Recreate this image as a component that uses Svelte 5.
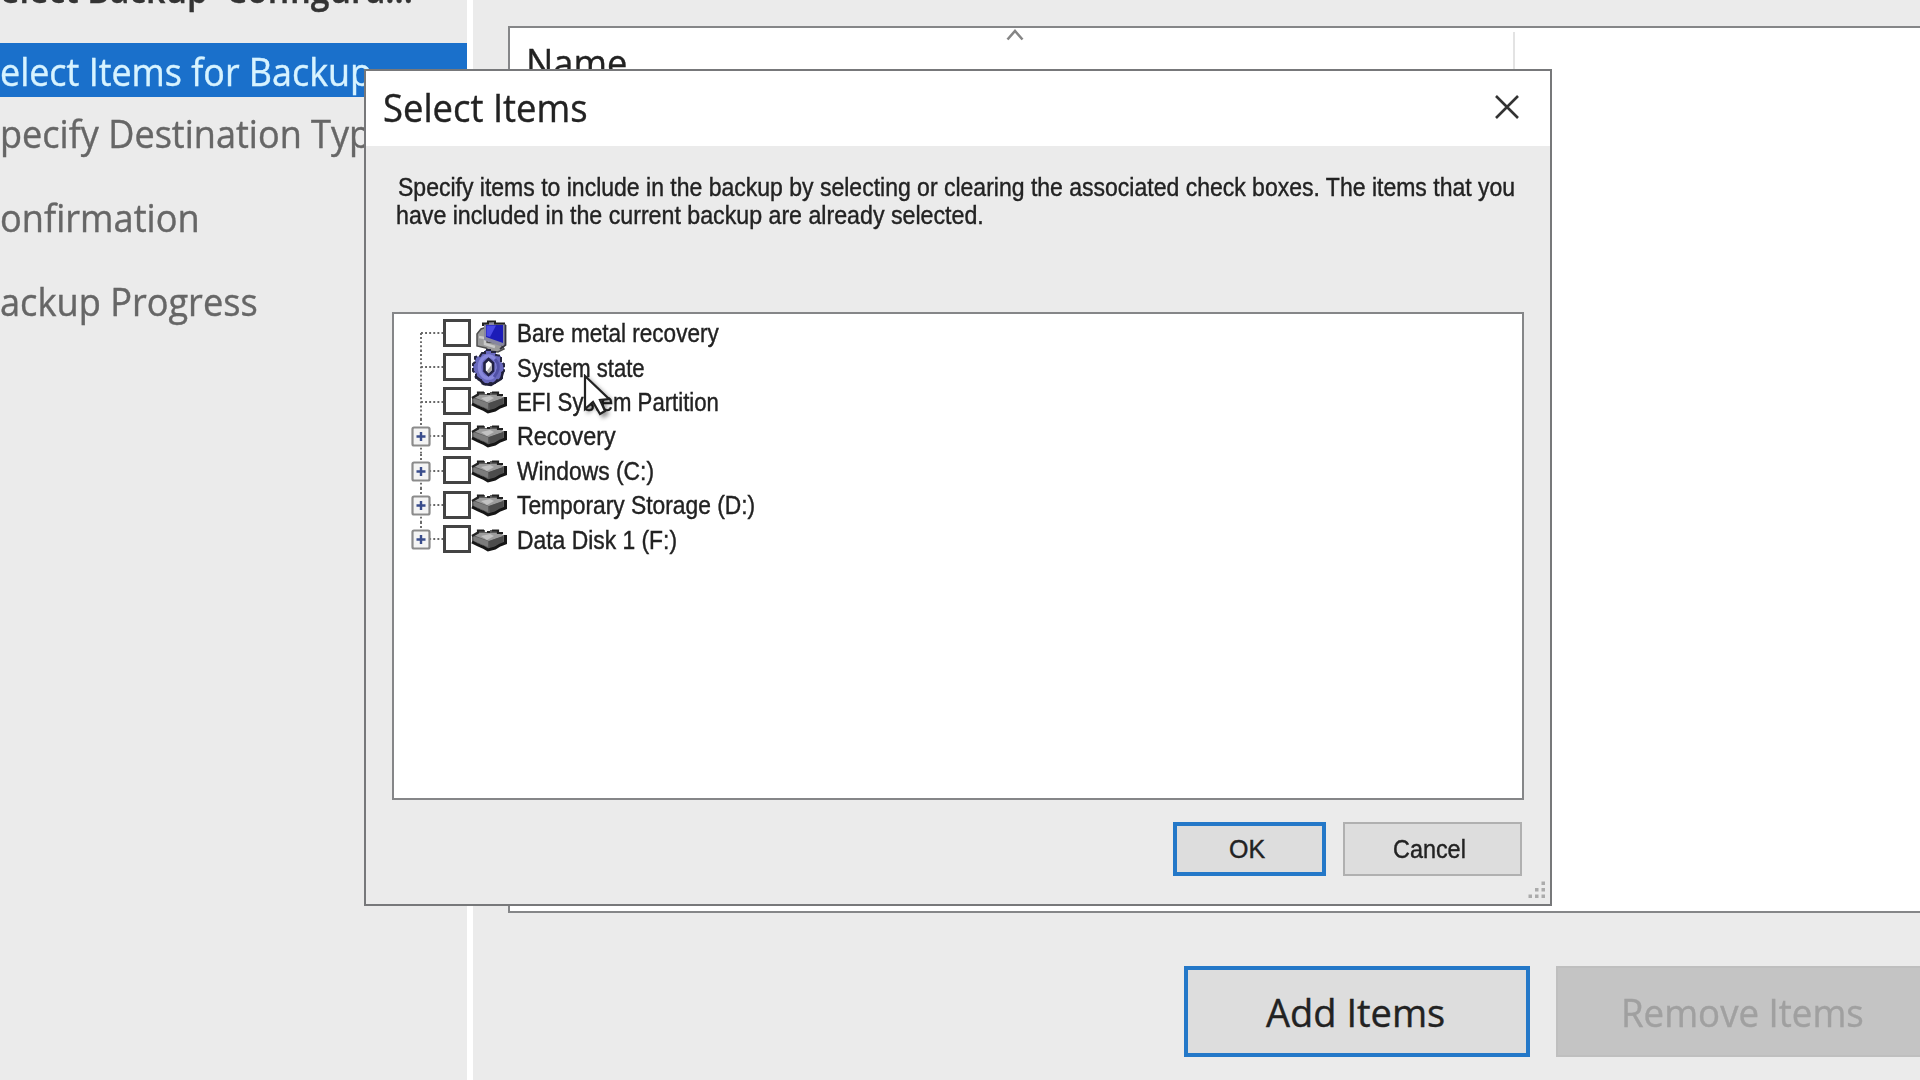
<script>
  const steps = [
    { text: 'elect Backup  Configura...', width: 413, kind: 'done' },
    { text: 'elect Items for Backup', width: 372, kind: 'current' },
    { text: 'pecify Destination Type', width: 391, kind: '' },
    { text: 'onfirmation', width: 200, kind: '' },
    { text: 'ackup Progress', width: 258, kind: '' }
  ];

  const items = [
    { text: 'Bare metal recovery', width: 202, icon: 'computer', expandable: false },
    { text: 'System state', width: 128, icon: 'gear', expandable: false },
    { text: 'EFI System Partition', width: 202, icon: 'disk', expandable: false },
    { text: 'Recovery', width: 99, icon: 'disk', expandable: true },
    { text: 'Windows (C:)', width: 137, icon: 'disk', expandable: true },
    { text: 'Temporary Storage (D:)', width: 238, icon: 'disk', expandable: true },
    { text: 'Data Disk 1 (F:)', width: 160, icon: 'disk', expandable: true }
  ];

  // Condenses a line of text horizontally so that it fills the given width.
  function condense(node, width) {
    node.style.transform = `scaleX(${width / node.offsetWidth})`;
  }
</script>

{#snippet label(text, width)}
  <span class="label" style="width:{width}px"><span class="glyphs" use:condense={width}>{text}</span></span>
{/snippet}

<div class="screen">
  <nav class="steps">
    {#each steps as step}
      <div class="step {step.kind}">{@render label(step.text, step.width)}</div>
    {/each}
  </nav>

  <main class="page">
    <section class="list">
      <div class="column">
        {@render label('Name', 101)}
        <svg class="sort" width="18" height="14" viewBox="0 0 18 14"><path d="M1.500 11.500 9 3 16.500 11.500" fill="none" stroke="#858585" stroke-width="2.600" /></svg>
      </div>
    </section>
    <div class="actions">
      <button class="add">{@render label('Add Items', 179)}</button>
      <button class="remove" disabled>{@render label('Remove Items', 243)}</button>
    </div>
  </main>

  <section class="dialog">
    <header>
      {@render label('Select Items', 205)}
      <svg class="close" width="24" height="24" viewBox="0 0 24 24"><path d="M1 1 23 23M23 1 1 23" stroke="#333" stroke-width="2.600" /></svg>
    </header>
    <p>
      <span class="first">{@render label('Specify items to include in the backup by selecting or clearing the associated check boxes. The items that you', 1117)}</span>
      {@render label('have included in the current backup are already selected.', 588)}
    </p>
    <div class="tree">
      {#each items as item}
        <div class="row">
          <svg class="branch" width="30" height="34.400" viewBox="0 0 30 34.400">
            <path
              d="M8 {item === items[0] ? 17 : 0}V{item === items[items.length - 1] ? 17 : 34.4}M8 17H30"
              fill="none" stroke="#666" stroke-width="1.900" stroke-dasharray="1.900 2.200" />
            {#if item.expandable}
              <rect x="-.500" y="8.500" width="17" height="18" rx="1.500" fill="#f4f4f4" stroke="#8b8b8b" stroke-width="2.200" />
              <path d="M3.500 17.500H12.500M8 13V22" stroke="#3a4d8c" stroke-width="2.400" />
            {/if}
          </svg>
          <span class="check"></span>
          <svg class="icon" width="36" height="36" viewBox="0 0 36 36">
            {#if item.icon === 'computer'}
              <path d="M6 19 10 14 16 12 16 27 29 28 33 34 27 37 18 36 15 33 6 31Z" fill="#9b9b9b" stroke="#4e4e4e" stroke-width="1.500" />
              <path d="M8 22 14 23V29L24 32" fill="none" stroke="#c9c9c9" stroke-width="2.500" />
              <path d="M13 9 17 7 35 9V30L29 31 13 25Z" fill="#8787a0" />
              <path d="M12 11V8.500H17V6.500H24V8.500H34" fill="none" stroke="#222" stroke-width="2" />
              <path d="M15 10 32 10 32 28 15 22Z" fill="#1c1cb8" />
              <path d="M15.500 10.500H25L19 22 15.500 21Z" fill="#4a4ae6" />
              <path d="M34.500 10V30L29 34" fill="none" stroke="#33333c" stroke-width="1.800" />
            {:else if item.icon === 'gear'}
              <path d="M11 3H14V0H20V2L25 2V5L30 6V12L33 14V21L31 23V28L26 30 24 33H19L17 35 10 33V30L5 29V24L2 21V14L4 12V7L9 6Z" fill="#6868bd" stroke="#25253f" stroke-width="2" stroke-dasharray="5 2" />
              <path d="M4 26 10 31 13 34 20 35 25 32 30 29 32 22" fill="none" stroke="#1f1f38" stroke-width="2.500" />
              <ellipse cx="17.500" cy="17" rx="9" ry="11" fill="none" stroke="#8888dc" stroke-width="3.500" />
              <path d="M24 9Q31 17 23 27" fill="none" stroke="#5050a6" stroke-width="3" />
              <path d="M17.500 9 22 13V21L17.500 25 13.500 21V13Z" fill="#fff" stroke="#222244" stroke-width="2.600" />
              <path d="M16 21 17.500 23.500 20.500 20V15Z" fill="#aaa" />
            {:else}
              <path d="M1 13 7 11V8H14V10H19V8H27V11L34 13.500V22L28 24 24 27H15L11 23 1 20Z" fill="#5c5c5c" />
              <path d="M2 13 8 11 27 11 33 14 18 19Z" fill="#9c9c9c" />
              <path d="M10 14 19 12 23 14 16 18Z" fill="#c2c2c2" />
              <path d="M18 19 32 14V20L19 26Z" fill="#4c4c4c" />
              <path d="M2 14 17 19V25L3 19Z" fill="#7c7c7c" />
              <path d="M1 20 7 23 12 25 17 28 24 26 29 23 34.500 21V13" fill="none" stroke="#161616" stroke-width="3" />
              <path d="M1 14 7 10.500V8.500H13M16 10H19M21 8.500H27V11H32" fill="none" stroke="#222" stroke-width="2.200" />
            {/if}
          </svg>
          {@render label(item.text, item.width)}
        </div>
      {/each}
    </div>
    <footer>
      <button class="ok">{@render label('OK', 36)}</button>
      <button class="cancel">{@render label('Cancel', 73)}</button>
    </footer>
    <svg class="grip" width="20" height="20" viewBox="0 0 20 20" fill="#ababab">
      <path d="M14.500 1.500h3.500v3.500h-3.500zM8 8h3.500v3.500h-3.500zM14.500 8h3.500v3.500h-3.500zM1.500 14.500h3.500v3.500H1.500zM8 14.500h3.500v3.500h-3.500zM14.500 14.500h3.500v3.500h-3.500z" />
    </svg>
  </section>

  <svg class="cursor" width="36" height="44" viewBox="0 0 36 44">
    <path d="M2 2V35L10 28 17 40 22 37 17 26 26 25Z" fill="#fff" stroke="#222" stroke-width="2.200" />
  </svg>
</div>

<style>
  :global(body) {
    overflow: hidden;
  }
  .screen {
    position: relative;
    display: flex;
    width: 1920px;
    height: 1080px;
    overflow: hidden;
    background: #ebebeb;
    font: 38px/54px 'Open Sans', 'Noto Sans', sans-serif;
    color: #222;
  }
  .label {
    display: block;
    white-space: pre;
  }
  .glyphs {
    display: inline-block;
    transform-origin: 0 50%;
    -webkit-text-stroke: 0.4px currentColor;
  }
  button {
    box-sizing: border-box;
    display: flex;
    align-items: center;
    margin: 0;
    border-radius: 0;
    font: inherit;
    color: inherit;
  }

  .steps {
    box-sizing: border-box;
    width: 473px;
    flex: none;
    border-right: 6px solid #fff;
  }
  .step {
    height: 54px;
    margin-bottom: 30px;
    color: #666;
  }
  .step.done {
    margin: -39px 0 28px;
    color: #333;
    font-weight: 600;
  }
  .step.current {
    line-height: 56px;
    margin-bottom: 9px;
    background: #1a70cb;
    color: #d7f3ff;
  }

  .page {
    flex: none;
    width: 1447px;
    overflow: hidden;
  }
  .list {
    box-sizing: border-box;
    width: 1500px;
    height: 887px;
    margin: 26px 0 0 35px;
    border: 2px solid #858688;
    background: #fff;
  }
  .column {
    box-sizing: border-box;
    display: flex;
    width: 1005px;
    height: 60px;
    margin-top: 4px;
    padding-left: 16px;
    border-right: 2px solid #e3e3e3;
    line-height: 60px;
  }
  .sort {
    margin: -4px 0 0 379px;
  }
  .actions {
    display: flex;
    gap: 26px;
    margin: 53px 0 0 711px;
  }
  .add {
    width: 346px;
    height: 91px;
    flex: none;
    padding: 0 0 0 78px;
    border: 4px solid #2478c8;
    background: #ddd;
  }
  .remove {
    width: 400px;
    height: 91px;
    flex: none;
    padding: 0 0 0 63px;
    border: 2px solid #bfbfbf;
    background: #c4c4c4;
    color: #a0a0a0;
  }

  .dialog {
    position: absolute;
    left: 364px;
    top: 69px;
    box-sizing: border-box;
    width: 1188px;
    height: 837px;
    border: 2px solid #77787a;
    background: #ebebeb;
    font: 25px/28px 'Liberation Sans', Arial, sans-serif;
  }
  header {
    box-sizing: border-box;
    display: flex;
    align-items: center;
    justify-content: space-between;
    height: 75px;
    padding: 0 31px 3px 17px;
    background: #fff;
    font: 38px/54px 'Open Sans', 'Noto Sans', sans-serif;
  }
  p {
    height: 137px;
    margin: 0;
    padding: 27px 0 0 30px;
    box-sizing: border-box;
  }
  .first {
    display: block;
    margin-left: 2px;
  }
  .tree {
    box-sizing: border-box;
    width: 1132px;
    height: 488px;
    margin: 29px 0 0 26px;
    padding: 2px 0 0 19px;
    border: 2px solid #858688;
    background: #fff;
  }
  .row {
    display: flex;
    align-items: center;
    height: 34.4px;
  }
  .branch {
    overflow: visible;
    flex: none;
  }
  .check {
    box-sizing: border-box;
    width: 28px;
    height: 28px;
    margin-top: -1px;
    border: 3px solid #444;
    background: #fff;
  }
  .icon {
    overflow: visible;
    margin-right: 10px;
  }
  footer {
    display: flex;
    gap: 17px;
    margin: 22px 0 0 807px;
  }
  .ok {
    width: 153px;
    height: 54px;
    padding: 0 0 0 52px;
    border: 4px solid #2478c8;
    background: #ddd;
  }
  .cancel {
    width: 179px;
    height: 54px;
    padding: 0 0 0 48px;
    border: 2px solid #b0b0b0;
    background: #ddd;
  }
  .grip {
    position: absolute;
    right: 3px;
    bottom: 4px;
  }
  .cursor {
    position: absolute;
    left: 583px;
    top: 374px;
    filter: drop-shadow(3px 3px 2px #0006);
  }
</style>
